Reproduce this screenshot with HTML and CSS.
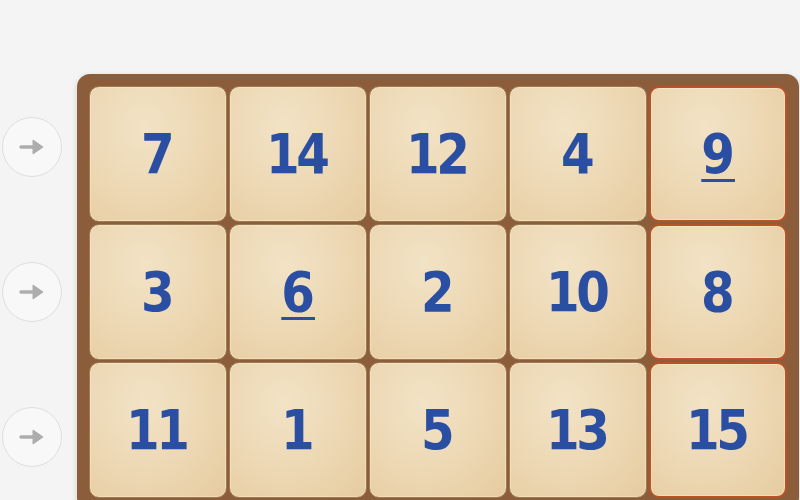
FILE: index.html
```html
<!DOCTYPE html>
<html>
<head>
<meta charset="utf-8">
<link rel="stylesheet" href="styles.css">
</head>
<body>
<div class="page">
  <div class="arrows">
    <button class="arrow"><svg width="26" height="18" viewBox="0 0 26 18"><path d="M2 9 H15" stroke="#adadad" stroke-width="3.5" stroke-linecap="round"/><path d="M14 2 L24 9 L14 16 Z" fill="#adadad" stroke="#adadad" stroke-width="1" stroke-linejoin="round"/></svg></button>
    <button class="arrow"><svg width="26" height="18" viewBox="0 0 26 18"><path d="M2 9 H15" stroke="#adadad" stroke-width="3.5" stroke-linecap="round"/><path d="M14 2 L24 9 L14 16 Z" fill="#adadad" stroke="#adadad" stroke-width="1" stroke-linejoin="round"/></svg></button>
    <button class="arrow"><svg width="26" height="18" viewBox="0 0 26 18"><path d="M2 9 H15" stroke="#adadad" stroke-width="3.5" stroke-linecap="round"/><path d="M14 2 L24 9 L14 16 Z" fill="#adadad" stroke="#adadad" stroke-width="1" stroke-linejoin="round"/></svg></button>
  </div>
  <div class="board">
    <div class="tile"><span>7</span></div>
    <div class="tile"><span>14</span></div>
    <div class="tile"><span>12</span></div>
    <div class="tile"><span>4</span></div>
    <div class="tile hot"><span class="ul">9</span></div>
    <div class="tile"><span>3</span></div>
    <div class="tile"><span class="ul">6</span></div>
    <div class="tile"><span>2</span></div>
    <div class="tile"><span>10</span></div>
    <div class="tile hot"><span>8</span></div>
    <div class="tile"><span>11</span></div>
    <div class="tile"><span>1</span></div>
    <div class="tile"><span>5</span></div>
    <div class="tile"><span>13</span></div>
    <div class="tile hot"><span>15</span></div>
  </div>
</div>
</body>
</html>
```
FILE: styles.css
```css
html, body {
  margin: 0;
  padding: 0;
  background: #f4f4f4;
  overflow: hidden;
  height: 500px;
}
.page {
  display: flex;
  align-items: flex-start;
  gap: 15px;
  padding-left: 2px;
}
.arrows {
  display: flex;
  flex-direction: column;
  gap: 85px;
  padding-top: 117px;
}
.arrow {
  width: 60px;
  height: 60px;
  border-radius: 50%;
  border: 1.5px solid #dedede;
  background: #f8f8f8;
  display: flex;
  align-items: center;
  justify-content: center;
  padding: 0;
  box-sizing: border-box;
}
.board {
  margin-top: 74px;
  background: #8b5d3b;
  border-radius: 13px;
  padding: 12px;
  display: grid;
  grid-template-columns: repeat(5, 138px);
  grid-template-rows: repeat(3, 136px);
  gap: 2px;
  box-shadow: 0 2px 6px rgba(0,0,0,0.15);
}
.tile {
  box-sizing: border-box;
  border-radius: 10px;
  border: 1.5px solid #a07a50;
  background: radial-gradient(ellipse at 40% 30%, #f2e3c6 0%, #ecd7b2 55%, #e6cb9f 100%);
  box-shadow: inset 0 0 0 1px rgba(255,245,225,0.35);
  display: flex;
  align-items: center;
  justify-content: center;
}
.tile.hot {
  border: 2.5px solid #bb5226;
}
.tile span {
  font-family: "DejaVu Sans", sans-serif;
  font-weight: bold;
  font-size: 55px;
  letter-spacing: -4px;
  color: #2a4fa2;
  line-height: 1;
  margin-left: -4px;
  display: inline-block;
  transform: scaleX(0.88);
}
.tile span.ul {
  text-decoration: underline;
  text-decoration-thickness: 3px;
  text-underline-offset: 6px;
  letter-spacing: 0;
  margin-left: 0;
}
```
